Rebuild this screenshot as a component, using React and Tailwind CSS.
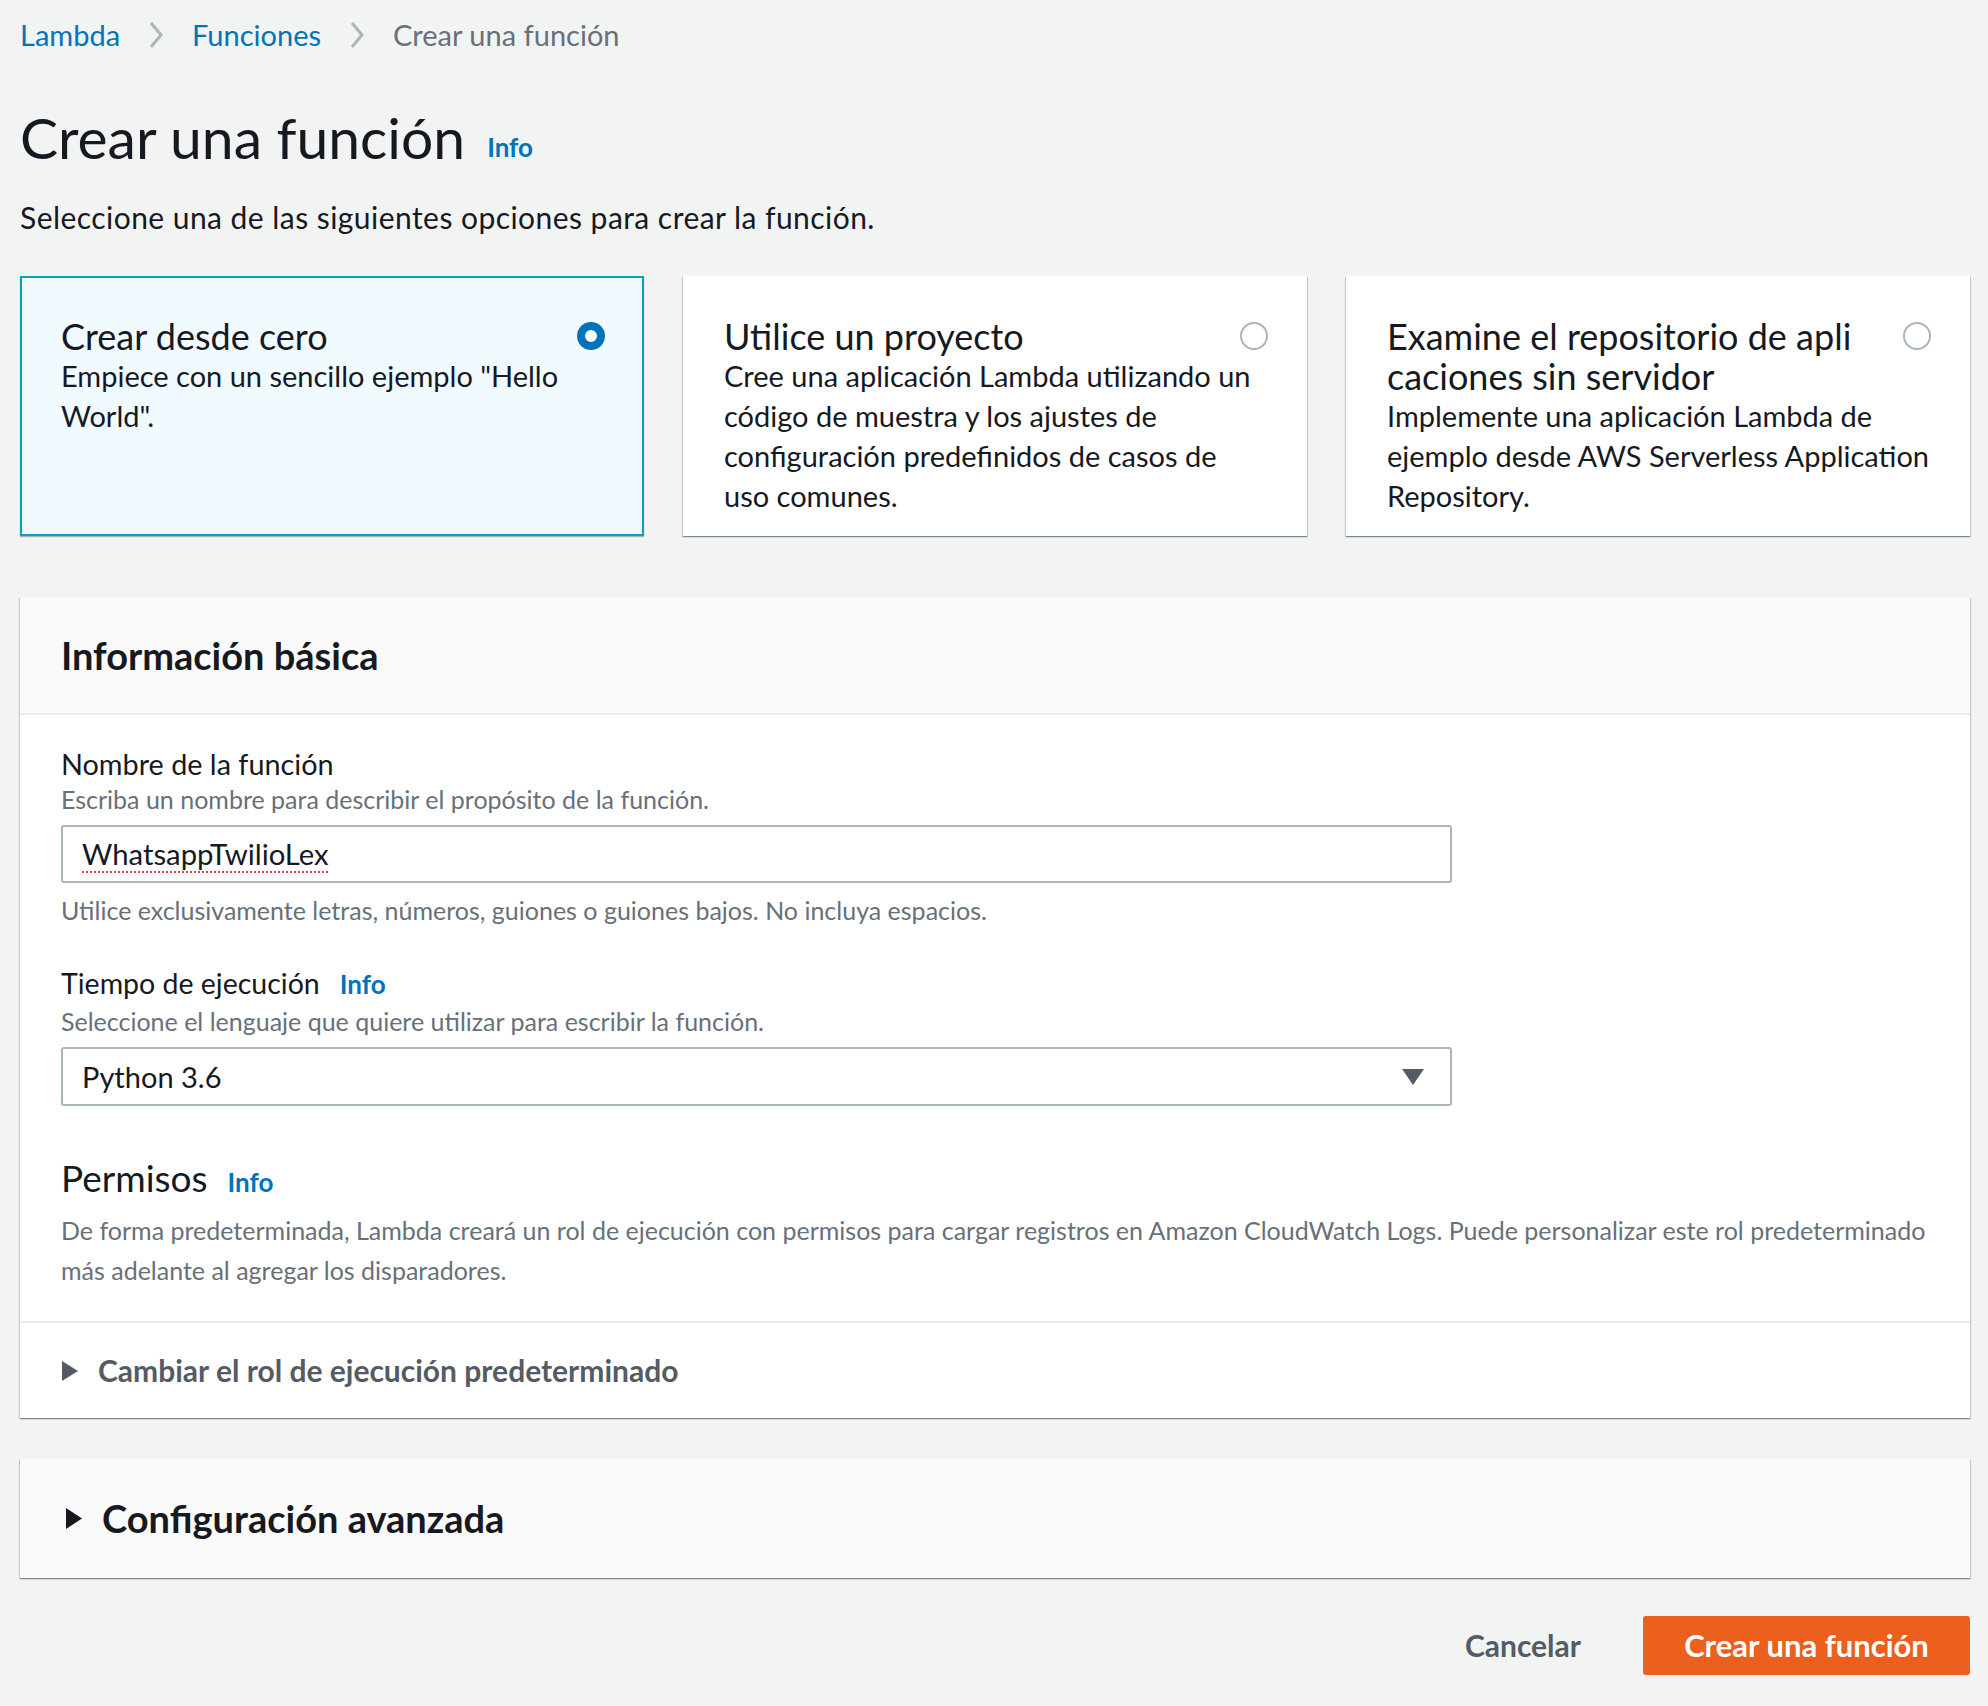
import React from 'react';

const FONT = { fontFamily: 'Lato, "Open Sans", Arial, sans-serif' };

const SHADOW = "shadow-[0_1px_1px_0_rgba(0,28,36,0.3),1px_1px_1px_0_rgba(0,28,36,0.15),-1px_1px_1px_0_rgba(0,28,36,0.15)]";

function Chevron() {
    return (
        <svg width="16" height="30" viewBox="0 0 16 30" className="mx-[28px]">
            <path d="M3 3 L13 15 L3 27" fill="none" stroke="#aab7b8" strokeWidth="3" />
        </svg>
    );
}

function Radio({ checked }) {
    if (checked) {
        return <div className="w-[28px] h-[28px] rounded-full border-[8px] border-[#0073bb] bg-white shrink-0 mt-[6px]" />;
    }
    return <div className="w-[28px] h-[28px] rounded-full border-[2px] border-[#aab7b8] bg-white shrink-0 mt-[6px]" />;
}

function OptionCard({ title, desc, checked, descClass }) {
    return (
        <div className={checked
            ? "flex-1 h-[260px] bg-[#f1faff] border-2 border-[#0aa0c4] shadow-[0_1px_1px_0_rgba(0,28,36,0.3)] pl-[39px] pr-[37px] pt-[38px]"
            : "flex-1 h-[260px] bg-white " + SHADOW + " pl-[41px] pr-[39px] pt-[40px]"}>
            <div className="flex justify-between gap-[16px]">
                <div className="w-[472px] text-[36px] leading-[40px] text-[#16191f] break-all">{title}</div>
                <Radio checked={checked} />
            </div>
            <div className={"text-[29px] leading-[40px] text-[#16191f] " + (descClass || "mr-[-22px]")}>{desc}</div>
        </div>
    );
}

function InfoLink({ className }) {
    return <span className={"text-[#0073bb] font-bold text-[26px] " + (className || "")}>Info</span>;
}

function Triangle({ w, h }) {
    return (
        <svg width={w} height={h} viewBox="0 0 10 13" preserveAspectRatio="none">
            <path d="M0 0 L10 6.5 L0 13 Z" fill="currentColor" />
        </svg>
    );
}

export default function App() {
    return (
        <div style={FONT} className="min-h-[1706px] w-[1988px] bg-[#f2f3f3] pl-[20px] pr-[18px] pt-[15px] text-[#16191f]">
            {/* Breadcrumb */}
            <div className="flex items-center h-[40px] text-[29px]">
                <span className="text-[#0073bb]">Lambda</span>
                <Chevron />
                <span className="text-[#0073bb]">Funciones</span>
                <Chevron />
                <span className="text-[#687078]">Crear una función</span>
            </div>

            {/* Titulo */}
            <div className="flex items-end mt-[50px] h-[64px]">
                <h1 className="text-[57px] leading-[64px]">Crear una función</h1>
                <InfoLink className="ml-[22px] mb-[2px]" />
            </div>
            <p className="text-[30px] tracking-[0.45px] leading-[36px] mt-[30px]">Seleccione una de las siguientes opciones para crear la función.</p>

            {/* Opciones */}
            <div className="flex gap-[39px] mt-[41px]">
                <OptionCard checked title="Crear desde cero" desc={'Empiece con un sencillo ejemplo "Hello World".'} />
                <OptionCard title="Utilice un proyecto" descClass="w-[536px]" desc="Cree una aplicación Lambda utilizando un código de muestra y los ajustes de configuración predefinidos de casos de uso comunes." />
                <OptionCard title="Examine el repositorio de aplicaciones sin servidor" desc="Implemente una aplicación Lambda de ejemplo desde AWS Serverless Application Repository." />
            </div>

            {/* Información básica */}
            <div className={"mt-[61px] bg-white " + SHADOW}>
                <div className="h-[118px] bg-[#fafafa] border-b-2 border-[#eaeded] flex items-center px-[41px]">
                    <h2 className="text-[38px] font-bold">Información básica</h2>
                </div>
                <div className="px-[41px] pt-[31px]">
                    <div className="text-[28.8px] leading-[36px]">Nombre de la función</div>
                    <div className="text-[25px] leading-[34px] text-[#687078]">Escriba un nombre para describir el propósito de la función.</div>
                    <div className="mt-[9px] w-[1391px] h-[58px] border-2 border-[#aab7b8] rounded-[3px] bg-white flex items-center px-[19px]">
                        <span className="text-[29.3px] underline decoration-dotted decoration-[#e3404a] decoration-2 underline-offset-[6px]">WhatsappTwilioLex</span>
                    </div>
                    <div className="text-[25px] leading-[34px] text-[#687078] mt-[10px]">Utilice exclusivamente letras, números, guiones o guiones bajos. No incluya espacios.</div>

                    <div className="flex items-baseline gap-[20px] mt-[38px]">
                        <span className="text-[28.5px] leading-[36px]">Tiempo de ejecución</span>
                        <InfoLink />
                    </div>
                    <div className="text-[25px] leading-[34px] text-[#687078]">Seleccione el lenguaje que quiere utilizar para escribir la función.</div>
                    <div className="mt-[9px] w-[1391px] h-[59px] border-2 border-[#aab7b8] rounded-[3px] bg-white flex items-center justify-between pl-[19px] pr-[26px]">
                        <span className="text-[29px]">Python 3.6</span>
                        <svg width="22" height="16" viewBox="0 0 22 16"><path d="M0 0 H22 L11 16 Z" fill="#545b64" /></svg>
                    </div>

                    <div className="flex items-baseline gap-[20px] mt-[52px]">
                        <span className="text-[37px] leading-[40px]">Permisos</span>
                        <InfoLink />
                    </div>
                    <div className="text-[25px] leading-[40px] text-[#687078] mt-[8px] pb-[31px]">
                        De forma predeterminada, Lambda creará un rol de ejecución con permisos para cargar registros en Amazon CloudWatch Logs. Puede personalizar este rol predeterminado más adelante al agregar los disparadores.
                    </div>
                </div>
                <div className="border-t-2 border-[#eaeded] h-[97px] flex items-center pl-[42px] gap-[20px] text-[#545b64]">
                    <Triangle w={16} h={20} />
                    <span className="text-[30px] font-bold">Cambiar el rol de ejecución predeterminado</span>
                </div>
            </div>

            {/* Configuración avanzada */}
            <div className={"mt-[41px] h-[119px] bg-[#fafafa] flex items-center pl-[46px] gap-[20px] text-[#16191f] " + SHADOW}>
                <Triangle w={16} h={21} />
                <span className="text-[38px] font-bold">Configuración avanzada</span>
            </div>

            {/* Botones */}
            <div className="flex justify-end items-center gap-[62px] mt-[38px]">
                <button className="text-[30px] font-bold text-[#545b64]">Cancelar</button>
                <button className="h-[59px] w-[327px] rounded-[3px] bg-[#eb5f1f] text-white text-[31px] font-bold">Crear una función</button>
            </div>
        </div>
    );
}
